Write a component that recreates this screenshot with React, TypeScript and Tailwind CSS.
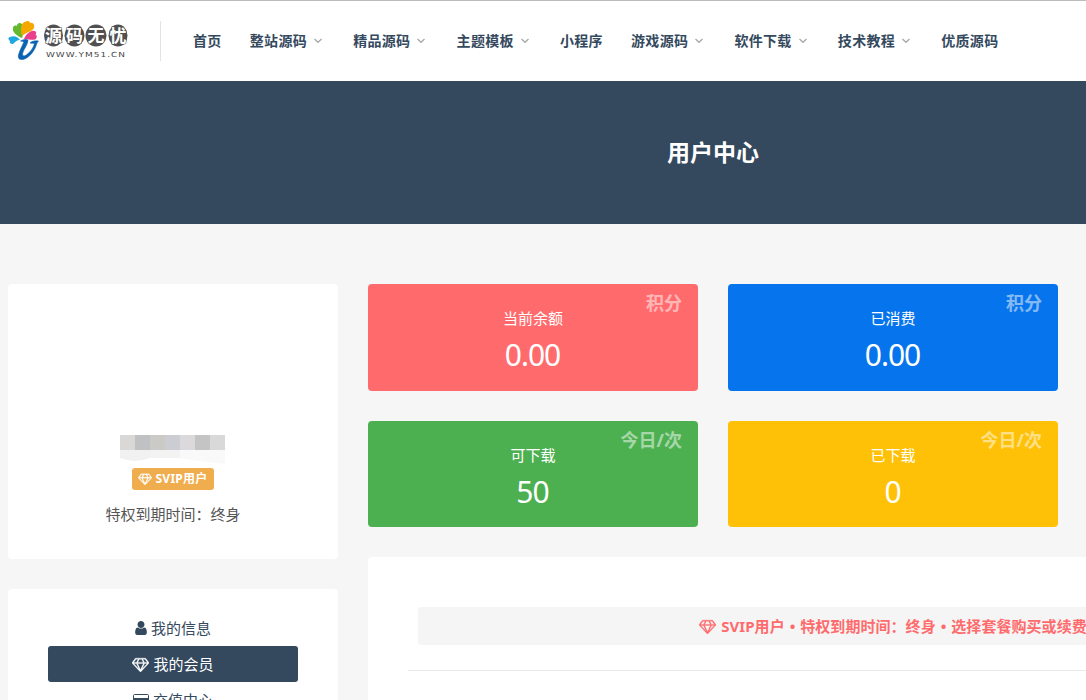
/**
 * User Center Page
 * Member dashboard with balance cards and VIP status
 */

import { useState } from 'react'

interface NavItem {
  label: string
  hasMenu?: boolean
}

interface StatCard {
  label: string
  value: string
  unit: string
  color: string
}

const navItems: NavItem[] = [
  { label: '首页' },
  { label: '整站源码', hasMenu: true },
  { label: '精品源码', hasMenu: true },
  { label: '主题模板', hasMenu: true },
  { label: '小程序' },
  { label: '游戏源码', hasMenu: true },
  { label: '软件下载', hasMenu: true },
  { label: '技术教程', hasMenu: true },
  { label: '优质源码' },
]

const stats: StatCard[] = [
  { label: '当前余额', value: '0.00', unit: '积分', color: 'bg-[#ff6b6d] h-[107px]' },
  { label: '已消费', value: '0.00', unit: '积分', color: 'bg-[#0674ec] h-[107px]' },
  { label: '可下载', value: '50', unit: '今日/次', color: 'bg-[#4caf50] h-[106px]' },
  { label: '已下载', value: '0', unit: '今日/次', color: 'bg-[#ffc107] h-[106px]' },
]

const menuItems = [
  { label: '我的信息', Icon: UserIcon },
  { label: '我的会员', Icon: DiamondIcon },
  { label: '充值中心', Icon: CardIcon },
]

const mosaic = [
  'bg-[#d9d8d6]',
  'bg-[#bfc1c3]',
  'bg-[#cbcac6]',
  'bg-[#cccdd2]',
  'bg-[#dbd9db]',
  'bg-[#c4c4c5]',
  'bg-[#d9d9da]',
]

function DiamondIcon({ className }: { className?: string }) {
  return (
    <svg
      viewBox="0 0 2048 1792"
      fill="currentColor"
      stroke="currentColor"
      strokeWidth="40"
      className={className ?? 'h-[15px] w-[17px]'}
    >
      <path d="M212 768l623 665-300-665H212zm812 772l349-772H675zM538 640l204-384H480L192 640h346zm675 793l623-665h-323zM683 640h682l-204-384H887zm827 0h346l-288-384h-262zm141-486l384 512q14 18 13 41.5t-17 40.5l-960 1024q-18 20-47 20t-47-20L17 748Q1 731 0 707.5T13 666l384-512q18-26 51-26h1152q33 0 51 26z" />
    </svg>
  )
}

function UserIcon() {
  return (
    <svg viewBox="256 128 1280 1536" fill="currentColor" className="h-[14px] w-[12px]">
      <path d="M1536 1399q0 109-62.5 187t-150.5 78h-854q-88 0-150.5-78t-62.5-187q0-85 8.500-160.500t31.500-152 58.500-131 94-89 134.500-34.500q131 128 313 128t313-128q76 0 134.500 34.500t94 89 58.500 131 31.500 152 8.500 160.500zm-256-887q0 159-112.500 271.500t-271.500 112.500-271.500-112.500-112.500-271.500 112.500-271.500 271.500-112.500 271.500 112.500 112.500 271.500z" />
    </svg>
  )
}

function CardIcon() {
  return (
    <svg viewBox="0 0 16 13" className="h-[13px] w-[16px]">
      <rect x="0.5" y="0.5" width="15" height="12" rx="1" fill="none" stroke="currentColor" />
      <path d="M0 4h16v4H0zM2 10h3v1H2zM6 10h4v1H6z" fill="currentColor" />
    </svg>
  )
}

function Logo() {
  return (
    <svg viewBox="0 0 120 42" className="h-[42px] w-[120px] shrink-0">
      {/* Flower */}
      <path d="M14 18C9 16 4 12 5 8c0-2 2-3 4-2 0-3 3-4 5-2 2 3 2 9 0 14z" fill="#63b82e" />
      <path d="M14 16C12 9 13 2 18 1.500c2-1 4 0 4 1.500 3-1 5 2 4 5-2 4-8 4-12 8z" fill="#f5a800" />
      <path d="M16 19C18 14 23 10 26 11c2 0 3 2 1.500 3.500 2 1 1.500 4-.5 5-4 1-7-1-11-.5z" fill="#e83e8c" />
      <path d="M5 24c-2 0-4-1-3-3-2-1-2-4 0-4 4-2 8 0 10 3-3 0-5 2-7 4z" fill="#1fa8e0" />
      <path
        d="M12.500 21c2-1.500 8-2.500 7.500 0-1 5-5 9-5.500 13 0 3 3 2 5 0 4-3 6-7 7-10.500l-4.500-.5c2-2 5-2.500 8.500-2-1 1-1.500 2-2 3.500-2 6-6 12-12 14.500-4 1.500-7 0-6-4 1-5 4-9 5.500-13.500-1 0-2 0-3.500-.5z"
        fill="#0963b1"
        stroke="#0963b1"
        strokeWidth="0.6"
      />
      {/* Wordmark */}
      <g fill="#505050">
        <ellipse cx="45.500" cy="15.500" rx="9.500" ry="11" />
        <ellipse cx="66.500" cy="15.500" rx="10" ry="11" />
        <ellipse cx="88" cy="15.500" rx="10.500" ry="11" />
        <ellipse cx="110" cy="15.500" rx="9.500" ry="11" />
      </g>
      <g
        fill="#fff"
        stroke="#505050"
        strokeWidth="1.2"
        paintOrder="stroke"
        fontSize="17"
        fontWeight="700"
        textAnchor="middle"
      >
        <text x="45.500" y="22">源</text>
        <text x="66.500" y="22">码</text>
        <text x="88" y="22">无</text>
        <text x="110" y="22">忧</text>
      </g>
      <text
        x="38"
        y="36.500"
        fill="#444"
        fontFamily="DejaVu Sans"
        fontSize="7"
        letterSpacing="0.8"
        textLength="80"
        lengthAdjust="spacingAndGlyphs"
      >
        WWW.YM51.CN
      </text>
    </svg>
  )
}

function Header() {
  return (
    <header className="flex h-[81px] items-center border-t border-[#bcbcbc] bg-white pl-2">
      <Logo />
      <div className="ml-8 h-10 w-px bg-[#e3e3e3]" />
      <nav className="ml-8 flex gap-[30.2px] pb-0.5 text-[14px] font-bold tracking-[0.3px] text-[#34495e]">
        {navItems.map((item) => (
          <a
            key={item.label}
            href="#"
            className={`flex items-center whitespace-nowrap ${item.hasMenu ? '' : '-mr-0.5'}`}
          >
            {item.label}
            {item.hasMenu && (
              <svg viewBox="0 0 10 10" className="mt-0.5 ml-[6px] h-[10px] w-[10px]">
                <path d="M1.500 3L5 6.200 8.500 3" fill="none" stroke="#aaa" strokeWidth="1.400" />
              </svg>
            )}
          </a>
        ))}
      </nav>
    </header>
  )
}

export default function App() {
  const [active, setActive] = useState('我的会员')

  return (
    <div className="h-[700px] w-full overflow-hidden bg-[#f6f6f6] font-['Noto_Sans','Noto_Sans_CJK_SC',sans-serif] text-[15px] text-[#34495e]">
      <div className="w-[1426px]">
        <Header />

        <div className="flex h-[143px] items-center justify-center bg-[#34495e]">
          <h1 className="text-[23px] font-bold text-white">用户中心</h1>
        </div>

        <div className="flex items-start gap-[30px] px-2 pt-[60px]">
          {/* Sidebar */}
          <aside className="flex w-[330px] shrink-0 flex-col gap-[30px]">
            <div className="flex h-[275px] flex-col items-center rounded bg-white pt-[151px]">
              <div className="mr-px flex h-[15px] w-[105px] shrink-0">
                {mosaic.map((tone) => (
                  <span key={tone} className={`flex-1 ${tone}`} />
                ))}
              </div>
              <svg viewBox="0 0 105 14" className="mr-px h-[14px] w-[105px] shrink-0">
                <path d="M0 0h30v8Q15 14 0 8z" fill="#f0f1f0" />
                <path d="M30 0h30v8H30z" fill="#f3f3f3" />
                <path d="M60 0h45v14Q85 12 60 8z" fill="#f9f9f9" />
              </svg>
              <div className="mt-1 flex h-[22px] w-[82px] shrink-0 items-center justify-center gap-[3px] rounded-[3px] bg-[#f0ad4e] text-[12px] font-bold whitespace-nowrap text-white">
                <DiamondIcon className="h-[12px] w-[14px]" />
                <span className="tracking-[0.25px]">SVIP用户</span>
              </div>
              <p className="mt-[13px] leading-[22px] text-[#555]">特权到期时间：终身</p>
            </div>

            <div className="flex h-[240px] flex-col rounded bg-white px-10 pt-[21px]">
              {menuItems.map(({ label, Icon }) => (
                <button
                  key={label}
                  onClick={() => setActive(label)}
                  className={`flex h-9 shrink-0 items-center justify-center gap-1 rounded-[3px] ${
                    active === label ? 'bg-[#34495e] text-white' : 'text-[#34495e]'
                  }`}
                >
                  <Icon />
                  {label}
                </button>
              ))}
            </div>
          </aside>

          {/* Main content */}
          <main className="flex w-[1050px] shrink-0 flex-col gap-[30px]">
            <div className="grid w-[690px] grid-cols-2 gap-[30px]">
              {stats.map((stat) => (
                <div
                  key={stat.label}
                  className={`relative flex flex-col items-center rounded pt-[22px] text-white ${stat.color}`}
                >
                  <span className="absolute top-[6px] right-4 text-[18px] leading-[26px] font-bold opacity-50">
                    {stat.unit}
                  </span>
                  <span className="leading-[24px]">{stat.label}</span>
                  <span className="mt-[5px] mr-px text-[30px] leading-[40px] tracking-[-1px]">{stat.value}</span>
                </div>
              ))}
            </div>

            <div className="h-[300px] rounded bg-white px-10 pt-[50px]">
              <div className="mx-2.5 flex h-[38px] items-center justify-center gap-[5px] rounded-[3px] bg-[#f5f5f5] font-bold whitespace-nowrap text-[#ff6b6d]">
                <DiamondIcon />
                <span className="tracking-[0.05px] [word-spacing:1px]">
                  SVIP用户 • 特权到期时间：终身 • 选择套餐购买或续费
                </span>
              </div>
              <hr className="mt-[25px] border-[#e9e9e9]" />
            </div>
          </main>
        </div>
      </div>
    </div>
  )
}
